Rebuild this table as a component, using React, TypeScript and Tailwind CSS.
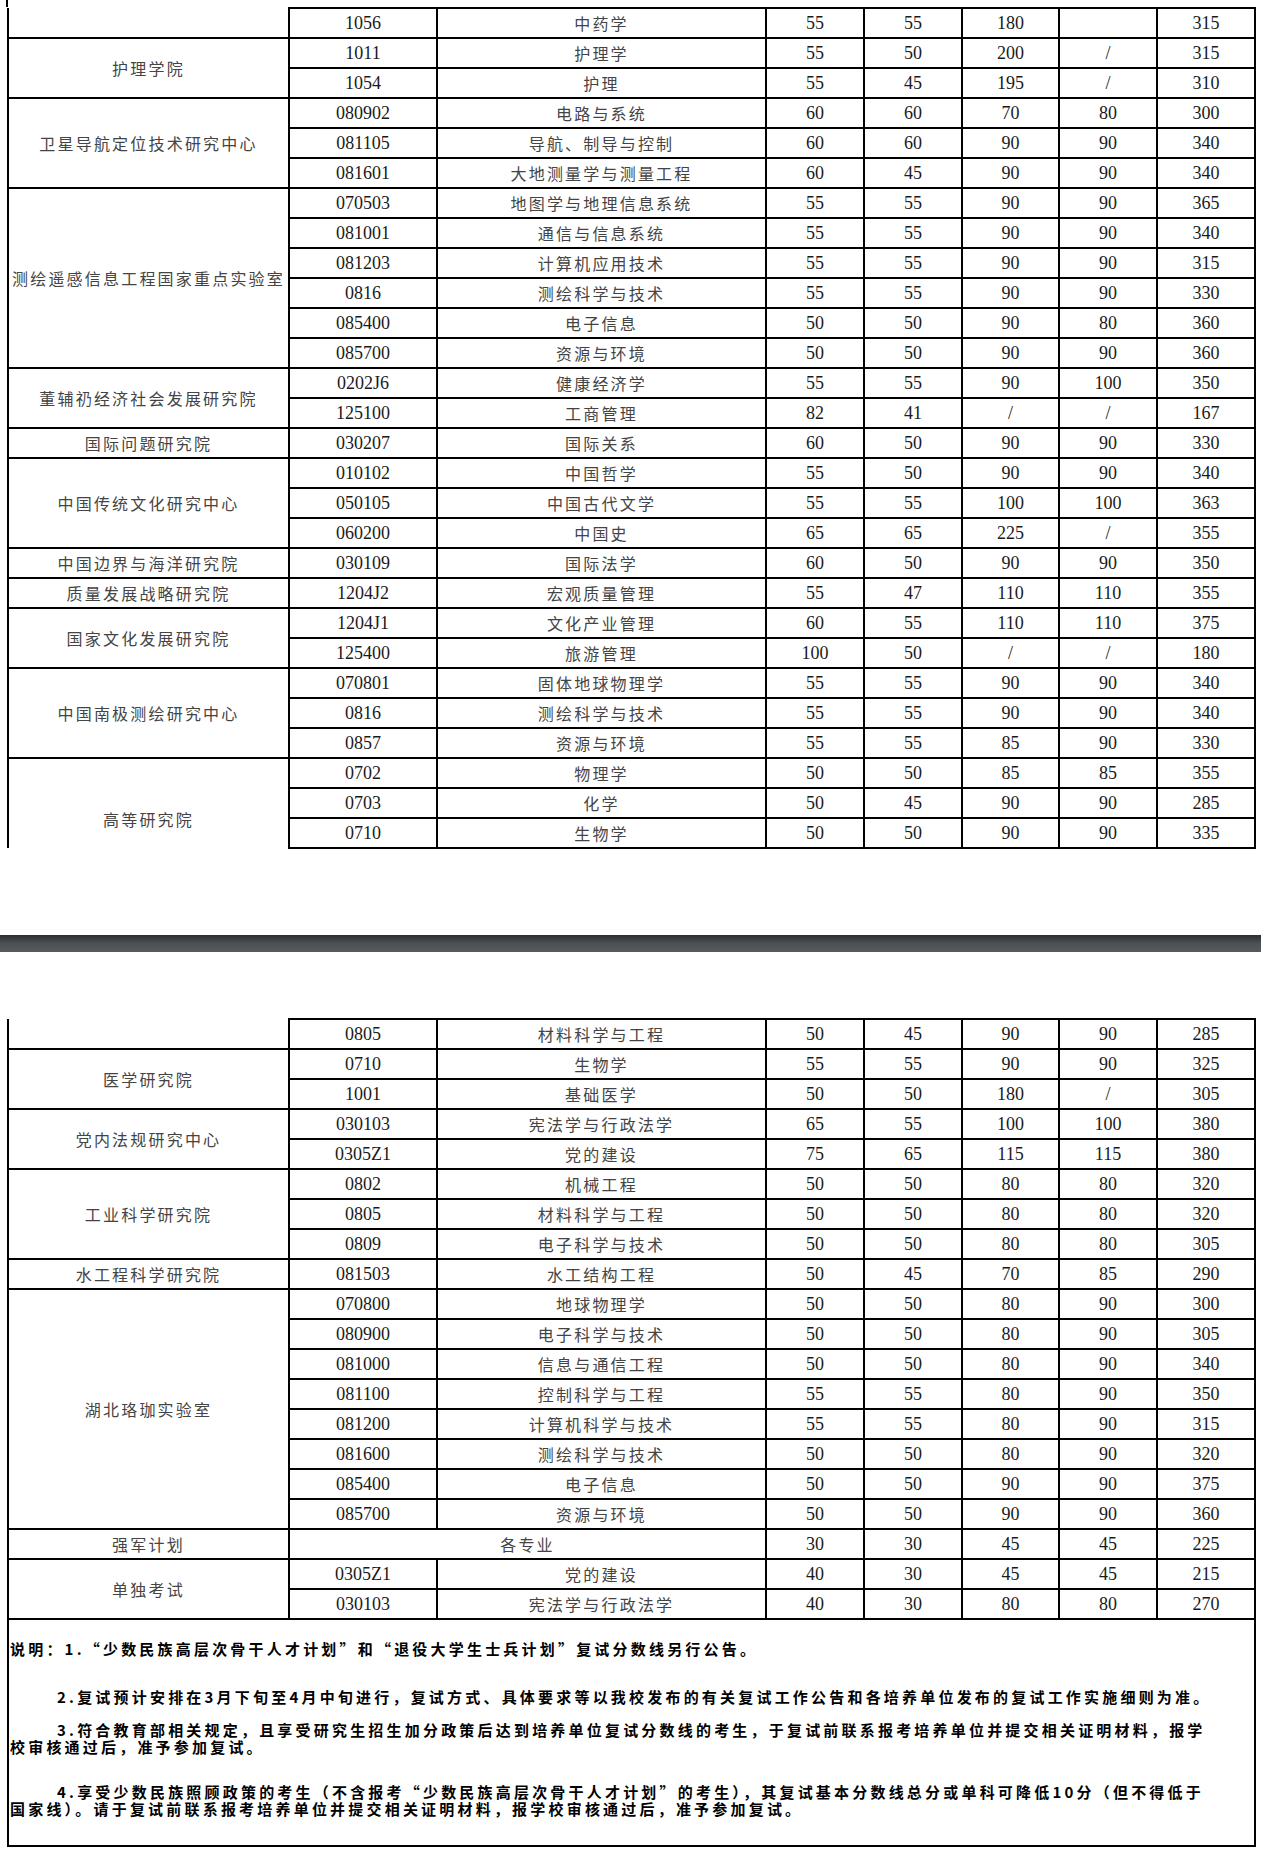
import React from 'react'

type Group = {
  org: string
  rows: string[][]
  noTop?: boolean
  noBottom?: boolean
  pad?: string
}

const topGroups: Group[] = [
  { org: '', noTop: true, rows: [['1056', '中药学', '55', '55', '180', '', '315']] },
  {
    org: '护理学院',
    rows: [
      ['1011', '护理学', '55', '50', '200', '/', '315'],
      ['1054', '护理', '55', '45', '195', '/', '310'],
    ],
  },
  {
    org: '卫星导航定位技术研究中心',
    rows: [
      ['080902', '电路与系统', '60', '60', '70', '80', '300'],
      ['081105', '导航、制导与控制', '60', '60', '90', '90', '340'],
      ['081601', '大地测量学与测量工程', '60', '45', '90', '90', '340'],
    ],
  },
  {
    org: '测绘遥感信息工程国家重点实验室',
    rows: [
      ['070503', '地图学与地理信息系统', '55', '55', '90', '90', '365'],
      ['081001', '通信与信息系统', '55', '55', '90', '90', '340'],
      ['081203', '计算机应用技术', '55', '55', '90', '90', '315'],
      ['0816', '测绘科学与技术', '55', '55', '90', '90', '330'],
      ['085400', '电子信息', '50', '50', '90', '80', '360'],
      ['085700', '资源与环境', '50', '50', '90', '90', '360'],
    ],
  },
  {
    org: '董辅礽经济社会发展研究院',
    rows: [
      ['0202J6', '健康经济学', '55', '55', '90', '100', '350'],
      ['125100', '工商管理', '82', '41', '/', '/', '167'],
    ],
  },
  { org: '国际问题研究院', rows: [['030207', '国际关系', '60', '50', '90', '90', '330']] },
  {
    org: '中国传统文化研究中心',
    rows: [
      ['010102', '中国哲学', '55', '50', '90', '90', '340'],
      ['050105', '中国古代文学', '55', '55', '100', '100', '363'],
      ['060200', '中国史', '65', '65', '225', '/', '355'],
    ],
  },
  { org: '中国边界与海洋研究院', rows: [['030109', '国际法学', '60', '50', '90', '90', '350']] },
  { org: '质量发展战略研究院', rows: [['1204J2', '宏观质量管理', '55', '47', '110', '110', '355']] },
  {
    org: '国家文化发展研究院',
    rows: [
      ['1204J1', '文化产业管理', '60', '55', '110', '110', '375'],
      ['125400', '旅游管理', '100', '50', '/', '/', '180'],
    ],
  },
  {
    org: '中国南极测绘研究中心',
    rows: [
      ['070801', '固体地球物理学', '55', '55', '90', '90', '340'],
      ['0816', '测绘科学与技术', '55', '55', '90', '90', '340'],
      ['0857', '资源与环境', '55', '55', '85', '90', '330'],
    ],
  },
  {
    org: '高等研究院',
    noBottom: true,
    pad: 'pt-[30px]',
    rows: [
      ['0702', '物理学', '50', '50', '85', '85', '355'],
      ['0703', '化学', '50', '45', '90', '90', '285'],
      ['0710', '生物学', '50', '50', '90', '90', '335'],
    ],
  },
]

const bottomGroups: Group[] = [
  { org: '', noTop: true, rows: [['0805', '材料科学与工程', '50', '45', '90', '90', '285']] },
  {
    org: '医学研究院',
    rows: [
      ['0710', '生物学', '55', '55', '90', '90', '325'],
      ['1001', '基础医学', '50', '50', '180', '/', '305'],
    ],
  },
  {
    org: '党内法规研究中心',
    rows: [
      ['030103', '宪法学与行政法学', '65', '55', '100', '100', '380'],
      ['0305Z1', '党的建设', '75', '65', '115', '115', '380'],
    ],
  },
  {
    org: '工业科学研究院',
    rows: [
      ['0802', '机械工程', '50', '50', '80', '80', '320'],
      ['0805', '材料科学与工程', '50', '50', '80', '80', '320'],
      ['0809', '电子科学与技术', '50', '50', '80', '80', '305'],
    ],
  },
  { org: '水工程科学研究院', rows: [['081503', '水工结构工程', '50', '45', '70', '85', '290']] },
  {
    org: '湖北珞珈实验室',
    rows: [
      ['070800', '地球物理学', '50', '50', '80', '90', '300'],
      ['080900', '电子科学与技术', '50', '50', '80', '90', '305'],
      ['081000', '信息与通信工程', '50', '50', '80', '90', '340'],
      ['081100', '控制科学与工程', '55', '55', '80', '90', '350'],
      ['081200', '计算机科学与技术', '55', '55', '80', '90', '315'],
      ['081600', '测绘科学与技术', '50', '50', '80', '90', '320'],
      ['085400', '电子信息', '50', '50', '90', '90', '375'],
      ['085700', '资源与环境', '50', '50', '90', '90', '360'],
    ],
  },
  { org: '强军计划', rows: [['*', '各专业', '30', '30', '45', '45', '225']] },
  {
    org: '单独考试',
    rows: [
      ['0305Z1', '党的建设', '40', '30', '45', '45', '215'],
      ['030103', '宪法学与行政法学', '40', '30', '80', '80', '270'],
    ],
  },
]

const serif = "font-['Liberation_Serif','Noto_Sans_CJK_SC',serif]"
const cjk = "font-['Noto_Sans_CJK_SC',sans-serif] text-[16px] tracking-[2.2px] text-[#444]"
const num = 'text-[18px] text-[#1a1a1a]'
const cell = 'border-2 border-black text-center align-middle p-0 leading-[20px]'

function ScoreTable({ groups, notes }: { groups: Group[]; notes?: React.ReactNode }) {
  return (
    <table className={`table-fixed border-collapse ml-[7px] w-[1247px] ${serif}`}>
      <colgroup>
        <col className="w-[281px]" />
        <col className="w-[148px]" />
        <col className="w-[329px]" />
        <col className="w-[98px]" />
        <col className="w-[98px]" />
        <col className="w-[97px]" />
        <col className="w-[98px]" />
        <col className="w-[98px]" />
      </colgroup>
      <tbody>
        {groups.flatMap((g, gi) =>
          g.rows.map((r, ri) => (
            <tr key={`${gi}-${ri}`} className="h-[30px]">
              {ri === 0 && (
                <td
                  rowSpan={g.rows.length}
                  className={`${cell} ${cjk} ${g.noTop ? 'border-t-0' : ''} ${g.noBottom ? 'border-b-0' : ''} ${g.pad ?? ''}`}
                >
                  {g.org}
                </td>
              )}
              {r[0] === '*' ? (
                <td colSpan={2} className={`${cell} ${cjk}`}>
                  {r[1]}
                </td>
              ) : (
                <>
                  <td className={`${cell} ${num}`}>{r[0]}</td>
                  <td className={`${cell} ${cjk}`}>{r[1]}</td>
                </>
              )}
              {r.slice(2).map((v, i) => (
                <td key={i} className={`${cell} ${num}`}>
                  {v}
                </td>
              ))}
            </tr>
          ))
        )}
        {notes && (
          <tr>
            <td colSpan={8} className="border-2 border-black h-[227px] align-top p-0 text-left">
              {notes}
            </td>
          </tr>
        )}
      </tbody>
    </table>
  )
}

function Notes() {
  const line = 'whitespace-nowrap leading-[17px]'
  return (
    <div className="font-['Noto_Sans_CJK_SC',sans-serif] font-bold text-[15px] tracking-[3.2px] text-black pl-[1px]">
      <div className={`${line} mt-[20px]`}>
        说明：1.“少数民族高层次骨干人才计划”和“退役大学生士兵计划”复试分数线另行公告。
      </div>
      <div className={`${line} mt-[31px] pl-[47px]`}>
        2.复试预计安排在3月下旬至4月中旬进行，复试方式、具体要求等以我校发布的有关复试工作公告和各培养单位发布的复试工作实施细则为准。
      </div>
      <div className={`${line} mt-[16px] pl-[47px]`}>
        3.符合教育部相关规定，且享受研究生招生加分政策后达到培养单位复试分数线的考生，于复试前联系报考培养单位并提交相关证明材料，报学
      </div>
      <div className={line}>校审核通过后，准予参加复试。</div>
      <div className={`${line} mt-[28px] pl-[47px]`}>
        4.享受少数民族照顾政策的考生（不含报考“少数民族高层次骨干人才计划”的考生），其复试基本分数线总分或单科可降低10分（但不得低于
      </div>
      <div className={line}>国家线）。请于复试前联系报考培养单位并提交相关证明材料，报学校审核通过后，准予参加复试。</div>
    </div>
  )
}

export default function App() {
  return (
    <div className="w-[1261px] h-[1861px] bg-white overflow-hidden">
      {/* page 1 tail */}
      <div className="h-[7px] ml-[6px] border-l-2 border-black" />
      <ScoreTable groups={topGroups} />
      <div className="h-[86px]" />
      {/* page divider */}
      <div className="h-[17px] bg-gradient-to-b from-[#2c2f32] via-[#4d5154] to-[#575b5e]" />
      <div className="h-[66px]" />
      {/* page 2 head */}
      <ScoreTable groups={bottomGroups} notes={<Notes />} />
    </div>
  )
}
